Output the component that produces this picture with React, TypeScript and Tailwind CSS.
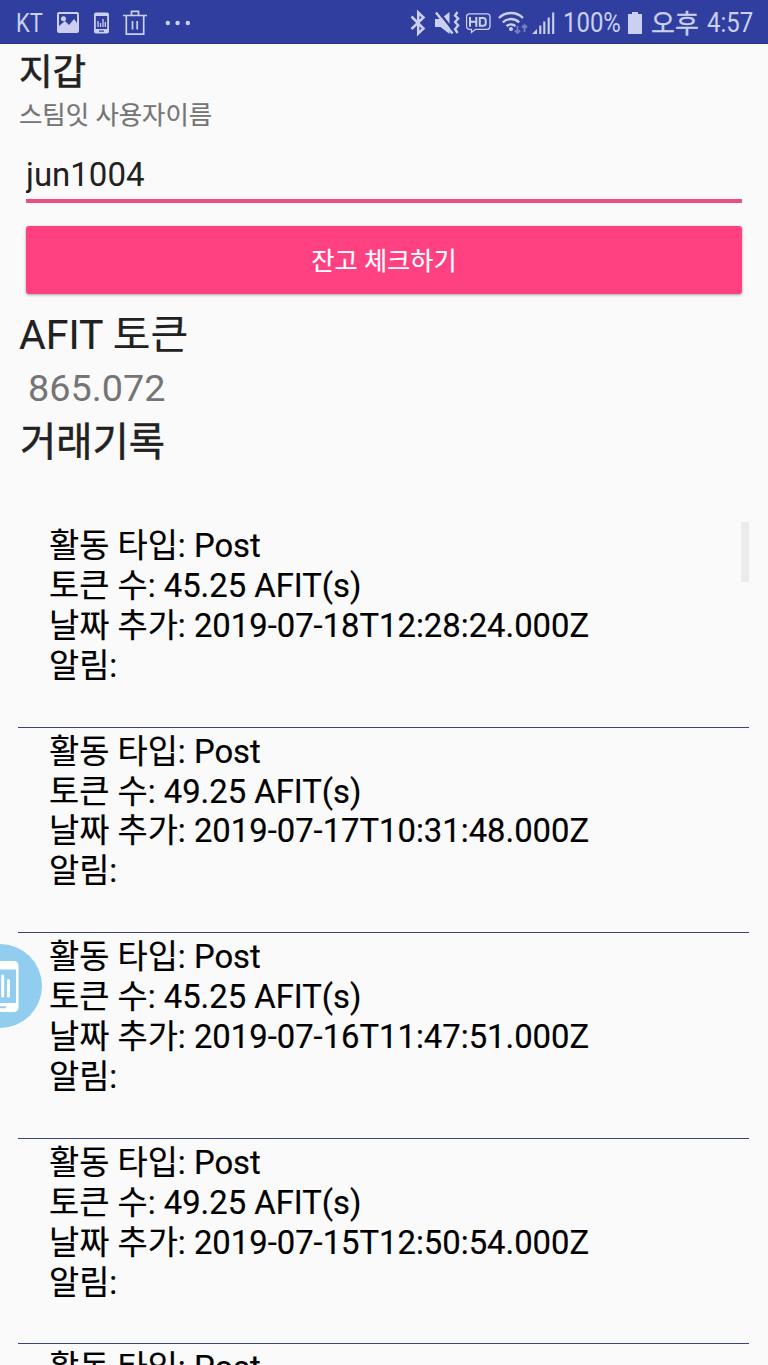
import type { ReactNode } from "react";

type Activity = { type: string; tokens: string; date: string };

const activities: Activity[] = [
  { type: "Post", tokens: "45.25", date: "2019-07-18T12:28:24.000Z" },
  { type: "Post", tokens: "49.25", date: "2019-07-17T10:31:48.000Z" },
  { type: "Post", tokens: "45.25", date: "2019-07-16T11:47:51.000Z" },
  { type: "Post", tokens: "49.25", date: "2019-07-15T12:50:54.000Z" },
  { type: "Post", tokens: "45.25", date: "2019-07-14T12:14:09.000Z" },
];

const Glyph = ({ width, className, children }: { width: number; className?: string; children: ReactNode }) => (
  <svg width={width} height="44" viewBox={`0 0 ${width} 44`} fill="none" stroke="currentColor" className={`shrink-0 ${className ?? ""}`}>
    {children}
  </svg>
);

const StatusBar = () => (
  <header className="flex h-11 shrink-0 items-center border-b border-[#29357f] bg-[#303f9f] text-[#cbd0ee]">
    <div className="ml-4 w-10 whitespace-nowrap pt-[3px] text-[25.5px] leading-[44px]">
      <span className="inline-block origin-left scale-x-[0.86]">KT</span>
    </div>

    {/* picture */}
    <Glyph width={24}>
      <path d="M3 12h18a2 2 0 0 1 2 2v17a2 2 0 0 1-2 2H3a2 2 0 0 1-2-2V14a2 2 0 0 1 2-2zM3 14v12l6-5 4 4 5-6 3 4v-9z" fill="currentColor" fillRule="evenodd" stroke="none" />
      <circle cx="7.5" cy="18.8" r="2.5" fill="currentColor" stroke="none" />
    </Glyph>

    {/* phone with a chart */}
    <Glyph width={15} className="ml-[14px]">
      <path d="M2 12.5h11a2 2 0 0 1 2 2v17a2 2 0 0 1-2 2H2a2 2 0 0 1-2-2v-17a2 2 0 0 1 2-2zM1.8 16v13h11.4V16zM5 30.5v1.2h5v-1.2z" fill="currentColor" fillRule="evenodd" stroke="none" />
      <path d="M4 27v-6M6.5 27v-4M9 27v-8M11.3 27v-5" strokeWidth="1.3" />
    </Glyph>

    {/* trash */}
    <Glyph width={24} className="ml-[14px]">
      <path d="M0 15.5h24M3.3 15.5v18.7h17.4V15.5M8.5 15.5v-4.2h7v4.2M9.5 21v8.5M14.2 21v8.5" strokeWidth="1.7" />
    </Glyph>

    <Glyph width={26} className="ml-[18px]">
      <g fill="currentColor" stroke="none">
        <circle cx="2.8" cy="23" r="2.2" />
        <circle cx="12.6" cy="23" r="2.2" />
        <circle cx="22.8" cy="23" r="2.2" />
      </g>
    </Glyph>

    <div className="ml-auto flex h-11 items-center">
      {/* bluetooth */}
      <Glyph width={16}>
        <path d="M1.5 16.5 13.5 28.5 8.2 33.5V12.5l5.3 5L1.5 29" strokeWidth="2.5" />
      </Glyph>

      {/* muted, vibrating */}
      <Glyph width={25} className="ml-[9px]">
        <path d="M0 19h5.5l9-7v22l-9-7H0z" fill="currentColor" stroke="none" />
        <path d="M3 11 19.5 32" stroke="#303f9f" strokeWidth="2.5" />
        <path d="M1 12.5 17.5 33.5" strokeWidth="2.4" />
        <path d="M22.5 12l-2.5 3.5 3.2 3-3.2 3.5 3.2 3.5-3.2 3.5 2.6 4" strokeWidth="2.3" />
      </Glyph>

      {/* HD voice */}
      <Glyph width={25} className="ml-[6px]">
        <path d="M3.5 13.8h17.5a3 3 0 0 1 3 3v9.5a3 3 0 0 1-3 3H9.5L5.5 32.5v-3.2h-2a3 3 0 0 1-3-3v-9.5a3 3 0 0 1 3-3z" strokeWidth="1.3" />
        <path d="M4 17v9.7M10.3 17v9.7M4 21.7h6.3M13.8 18h3.4a2.5 2.5 0 0 1 2.5 2.5v2.7a2.5 2.5 0 0 1-2.5 2.5h-3.4z" strokeWidth="2" />
      </Glyph>

      {/* wifi */}
      <Glyph width={31} className="ml-[7px]">
        <path d="M1 18a17 17 0 0 1 24 0M4.8 22.3a12 12 0 0 1 16.4 0M8.5 26.2a7 7 0 0 1 9 0" strokeWidth="2.4" />
        <circle cx="13" cy="29" r="2" fill="currentColor" stroke="none" />
        <path d="M19.5 26v7M17 30.5l2.5 2.5 2.5-2.5M26.5 32v-7M24 27.5l2.5-2.5 2.5 2.5" stroke="#7580c3" strokeWidth="1.8" />
      </Glyph>

      {/* signal */}
      <Glyph width={24} className="ml-[3px]">
        <path d="M0 34l5-5v5z" fill="currentColor" stroke="none" />
        <path d="M8.3 34v-8.5M12.3 34V21.5M16.7 34V17.5M21.2 34V12.5" strokeWidth="2.1" />
      </Glyph>

      <div className="ml-[7px] w-[63px] whitespace-nowrap pt-[3px] text-[27.5px] leading-[46px]">
        <span className="inline-block origin-left scale-x-[0.87]">100%</span>
      </div>

      {/* battery */}
      <Glyph width={16} className="ml-px">
        <path d="M5 12h6v2h4v20H1V14h4z" fill="currentColor" stroke="none" />
      </Glyph>

      <div className="ml-2 w-[56px] whitespace-nowrap pt-1 text-[26px] leading-[44px] [-webkit-text-stroke:0.3px]">오후</div>
      <div className="w-[61px] whitespace-nowrap pt-[3px] text-[27.5px] leading-[46px]">
        <span className="inline-block origin-left scale-x-[0.87]">4:57</span>
      </div>
    </div>
  </header>
);

const ActivityRow = ({ type, tokens, date }: Activity) => (
  <li className="h-[205.6px] shrink-0 whitespace-nowrap border-b border-[#3a4285] pl-[31px] pt-[5px] text-[32.8px] leading-[39.9px] text-black [-webkit-text-stroke:0.2px]">
    <p>활동 타입: {type}</p>
    <p>토큰 수: {tokens} AFIT(s)</p>
    <p>날짜 추가: {date}</p>
    <p>알림:</p>
  </li>
);

const FloatingBubble = () => (
  <div className="absolute left-[-42px] top-[944px] size-[84px] rounded-full bg-[#90cdee]">
    <svg width="84" height="84" viewBox="0 0 84 84" fill="none">
      <path d="M28 17h28a4.5 4.5 0 0 1 4.5 4.5v42a4.5 4.5 0 0 1-4.5 4.5H28a5 5 0 0 1-5-5V22a5 5 0 0 1 5-5zM26 25.5v33.5h32V25.5zM36 62.3v2h12v-2z" fill="#fff" fillRule="evenodd" />
      <path d="M35 51V39M44.7 52V32M50.5 52V36.5" stroke="#fff" strokeWidth="3" strokeLinecap="round" />
    </svg>
  </div>
);

export default function App() {
  return (
    <div className="relative flex h-[1365px] w-[768px] flex-col overflow-hidden bg-[#fafafa] font-['Roboto','Noto_Sans_CJK_KR',sans-serif] text-[#212121]">
      <StatusBar />

      <main className="flex min-h-0 flex-1 flex-col px-[19px]">
        <h1 className="mt-[5px] h-12 text-[36.5px] leading-[48px] [-webkit-text-stroke:0.6px]">지갑</h1>
        <label htmlFor="username" className="-mt-px h-[38px] text-[25.4px] leading-[38px] text-[#757575] [-webkit-text-stroke:0.2px]">
          스팀잇 사용자이름
        </label>

        <div className="mx-[7px] mt-4 flex h-[53px] border-b-4 border-[#ee4c85]">
          <input
            id="username"
            defaultValue="jun1004"
            className="-ml-1 w-full bg-transparent pl-1 text-[33px] leading-[49px] outline-none"
          />
        </div>
        <button className="mx-[7px] mt-[23px] h-[68px] shrink-0 rounded-[3px] bg-[#ff4081] pt-[3px] text-[25.2px] text-white shadow-[0_1px_3px_rgba(0,0,0,0.35)] [-webkit-text-stroke:0.2px]">
          잔고 체크하기
        </button>

        <h2 className="mt-[15px] h-[53px] text-[41px] leading-[53px] [-webkit-text-stroke:0.15px]">AFIT 토큰</h2>
        <p className="h-[53px] pl-[9px] text-[37.8px] leading-[52px] text-[#757575]">865.072</p>
        <h2 className="h-[53px] pl-px text-[39.4px] leading-[55px] [-webkit-text-stroke:0.5px]">거래기록</h2>

        <div className="relative -ml-px mt-[54px] flex min-h-0 flex-1 flex-col overflow-hidden">
          <ul className="flex flex-col">
            {activities.map((activity) => (
              <ActivityRow key={activity.date} {...activity} />
            ))}
          </ul>
          <div className="absolute right-0 top-0 h-[60px] w-2 bg-[#ececec]" />
        </div>
      </main>

      <FloatingBubble />
    </div>
  );
}
